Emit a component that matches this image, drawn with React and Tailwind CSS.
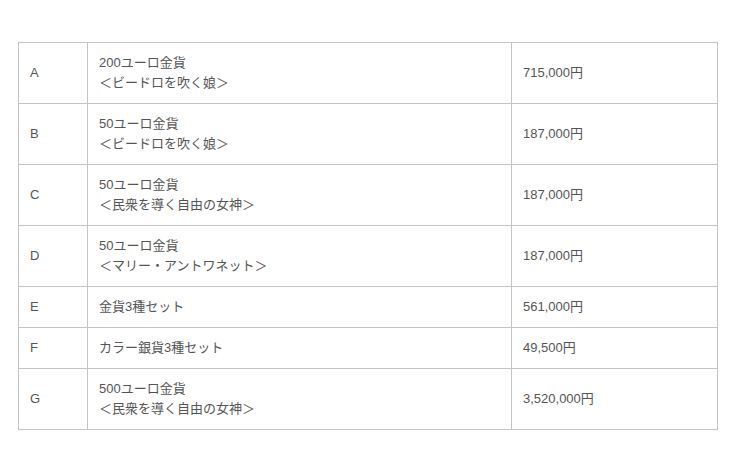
const rows = [
  { id: 'A', name: ['200ユーロ金貨', '＜ビードロを吹く娘＞'], price: '715,000円' },
  { id: 'B', name: ['50ユーロ金貨', '＜ビードロを吹く娘＞'], price: '187,000円' },
  { id: 'C', name: ['50ユーロ金貨', '＜民衆を導く自由の女神＞'], price: '187,000円' },
  { id: 'D', name: ['50ユーロ金貨', '＜マリー・アントワネット＞'], price: '187,000円' },
  { id: 'E', name: ['金貨3種セット'], price: '561,000円' },
  { id: 'F', name: ['カラー銀貨3種セット'], price: '49,500円' },
  { id: 'G', name: ['500ユーロ金貨', '＜民衆を導く自由の女神＞'], price: '3,520,000円' },
]

export default function App() {
  return (
    <div
      className="min-h-[470px] w-[740px] bg-white pl-[18px] pt-[42px] text-[13px] leading-[20px] text-[#555]"
      style={{ fontFamily: '"Liberation Sans", "Noto Sans CJK JP", sans-serif' }}
    >
      <table className="w-[699px] table-fixed border-collapse">
        <colgroup>
          <col className="w-[69px]" />
          <col className="w-[424px]" />
          <col className="w-[206px]" />
        </colgroup>
        <tbody>
          {rows.map((row) => (
            <tr key={row.id}>
              <td className="border border-[#c4c4c4] px-[11px] py-[10px] align-middle">{row.id}</td>
              <td className="border border-[#c4c4c4] px-[11px] py-[10px] align-middle">
                {row.name.map((line) => (
                  <div key={line}>{line}</div>
                ))}
              </td>
              <td className="border border-[#c4c4c4] px-[11px] py-[10px] align-middle">{row.price}</td>
            </tr>
          ))}
        </tbody>
      </table>
    </div>
  )
}
